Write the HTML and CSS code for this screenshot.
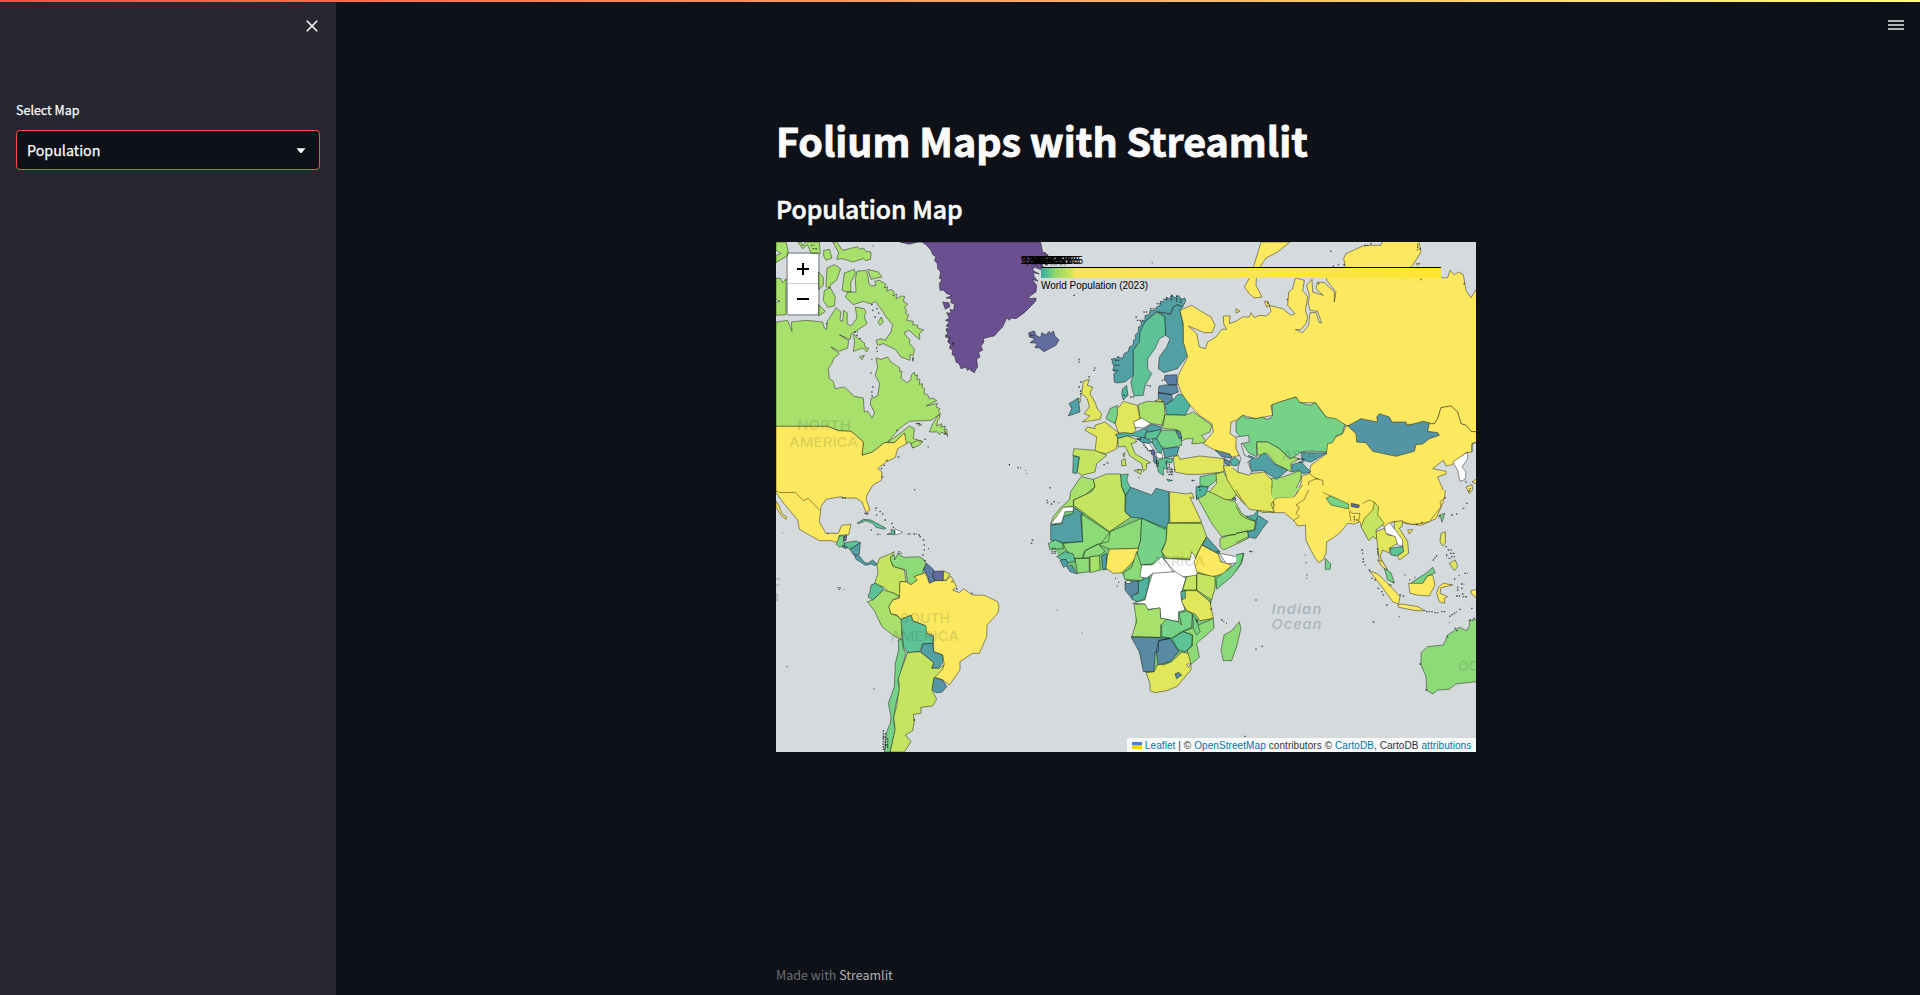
FILE: index.html
```html
<!DOCTYPE html>
<html lang="en">
<head>
<meta charset="utf-8">
<title>Folium Maps with Streamlit</title>
<link rel="stylesheet" href="styles.css">
</head>
<body>
<div class="decoration"></div>
<div class="app">
  <aside class="sidebar">
    <button class="close" aria-label="Close"><svg width="12" height="12" viewBox="0 0 12 12"><path d="M.8 .8 11.2 11.2M11.2 .8 .8 11.2"/></svg></button>
    <div class="field">
      <div class="label">Select Map</div>
      <div class="select"><span>Population</span><svg width="10" height="6" viewBox="0 0 10 6"><path d="M.5 .3h9L5.8 4.7q-.8.8-1.6 0z"/></svg></div>
    </div>
  </aside>
  <main class="main">
    <div class="menu"><svg width="16" height="10" viewBox="0 0 16 10"><path d="M0 1h16M0 5h16M0 9h16"/></svg></div>
    <div class="content">
      <h1>Folium Maps with Streamlit</h1>
      <h2>Population Map</h2>
      <div class="map">
        <svg class="world" width="700" height="510" viewBox="0 0 700 510">
          <!-- North America, Greenland -->
          <g transform="scale(.33333)">
            <path class="g" d="M0 240 35 235 45 262 48 268 46 240 90 235 140 240 145 258 152 262 153 240 180 197 195 210 192 235 200 238 203 205 214 213 213 245 225 252 243 228 238 195 265 200 270 210 265 225 273 245 240 268 226 275 222 293 190 278 218 296 215 318 190 328 165 315 190 335 172 350 170 360 157 380 160 410 172 418 177 440 205 435 235 463 262 468 265 510 275 508 288 528 296 512 283 487 285 470 305 462 311 425 298 400 305 375 300 348 315 352 335 345 345 360 372 378 370 388 378 388 375 408 392 422 403 415 407 398 415 390 418 402 425 398 422 412 432 412 430 427 440 425 438 436 446 440 444 455 455 458 460 470 470 468 482 476 450 492 485 484 480 495 492 500 487 508 495 515 465 535 400 538 370 560 335 600 375 572 400 552 415 560 412 590 430 595 440 598 410 618 403 600 388 605 385 575 355 602 325 602 290 630 258 640 262 600 240 580 225 568 187 566 155 553 0 553Z"/>
            <path class="y" d="M0 553H155L187 566 225 568 240 580 262 600 258 640 290 630 325 602 355 602 385 573 392 605 365 620 358 646 330 660 305 680 318 690 316 715 290 730 275 755 270 770 282 804 270 812 258 780 240 768 205 768 196 764 150 772 135 794 130 840 150 874 187 874 197 850 225 847 218 878 190 880 186 902 165 896 130 896 70 862 65 834 20 780 0 752Z"/>
            <path class="y" d="M0 777 8 790 18 815 32 825 30 832 15 820 0 795Z"/>
            <path class="l" d="M0 747 12 752 58 751 82 776 97 769 112 785 132 806"/>
            <path class="g" d="M0 0H30L37 30 33 42 0 62 0 40 15 35 0 25ZM0 108 14 110 20 122 30 110V218L0 220V180L12 178 0 172ZM66 0H75L80 12 88 0H130L133 34 105 34 95 8 80 20ZM143 25 160 22 168 48 150 55 143 42ZM170 0 182 0 200 25 245 14 250 22 262 18 270 28 285 30 284 52 268 56 262 50 230 60 200 50 182 52 188 32ZM153 78 175 68 194 80 182 115 163 128 162 138 150 134ZM127 90 142 106V130L128 142ZM145 145 163 137 178 165 175 192 155 196 142 175ZM128 188 148 208 128 222Z"/>
            <path class="g" d="M205 93 235 82 238 95 224 122 225 150 204 148 198 145ZM243 88 270 85 276 100 278 122 285 132 300 130 296 118 310 115 330 127 324 138 335 134 332 148 345 142 355 150 350 162 362 156 360 170 375 162 386 163 382 178 395 186 385 198 393 205 388 212 398 218 392 235 412 238 410 248 425 250 425 258 443 264 430 275 432 293 415 280 400 265 386 270 388 280 402 293 400 303 415 322 412 340 402 338 402 355 375 345 358 322 322 305 305 310 300 295 315 290 328 295 345 270 350 248 330 225 320 208 298 178 285 186 262 178 232 188 208 165 215 150 240 150 238 112ZM275 82 307 90 318 105 285 112ZM306 240 316 225 322 240 312 250ZM232 276 250 292 265 303 268 318 278 318 272 330 260 318 232 328 236 300ZM250 345 265 340 258 353Z"/>
            <path class="g" d="M490 516 480 530 470 545 460 570 485 570 490 578 498 570 507 578 506 568 515 583 512 562 504 564 508 552 495 555 498 545 482 552 485 535 492 528ZM425 543 437 548 430 552ZM405 605 425 595 440 600 430 610 410 618Z"/>
            <path class="p2" d="M372 0 400 7 425 0H794L800 30 815 38 800 52 812 68 796 60 805 88 775 75 770 85 790 96 772 92 775 105 786 118 768 112 782 130 780 150 765 160 755 170 780 168 780 175 775 182 745 212 720 230 705 228 700 235 692 228 680 255 665 270 655 282 640 285 622 290 624 300 615 312 620 325 608 330 612 345 602 352 605 375 598 385 596 392 585 386 580 380 575 386 570 376 555 380 550 366 540 360 536 342 528 338 530 325 520 318 524 308 515 300 520 288 508 285 515 275 510 262 520 260 512 250 520 240 508 235 520 228 512 212 525 214 522 202 533 205 535 185 524 182 526 170 510 168 528 160 512 155 503 145 492 145 490 125 498 112 490 110 494 90 485 80 484 65 475 55 480 45 470 38 465 25 450 8 438 0ZM500 180 518 182 522 194 508 202Z"/>
            <path class="d" d="M283 393h4M288 435h5M285 450h8M286 462h6M414 743h4M698 668h4M455 615h3M300 318h4M302 328h4M286 352h3M411 345v16M300 200h5M306 213h4M408 352h5M285 188h6M322 670h8M314 680h6M318 705h4M330 655h6M365 645h6M197 768h16M508 280h8M530 305h8M290 12h3M150 245h5M507 575h6M445 592h6M420 545h12M360 565h8M240 280h6M250 290h5M288 205h8M295 225h6M235 270h10M105 10h10M110 20h14M100 45h8M520 285v12M530 300v12M513 250v12"/>
          </g>

          <!-- Central and South America -->
          <g transform="translate(0 248) scale(.33333)">
            <path class="g3" d="M190 138 203 137V155L207 166 190 172 181 163Z"/><path class="p1" d="M205 138 212 135 210 152 204 153Z"/>
            <path class="g4" d="M207 158 240 153 253 158 222 178 205 168Z"/><path class="b1" d="M200 166 215 172 210 176 200 172Z"/>
            <path class="t2" d="M222 178 253 158 250 194 232 194ZM235 196 250 198 265 217 275 220 290 210 303 222 298 227 285 222 268 226 250 214 240 208Z"/>
            <path class="g4" d="M243 100 262 88 285 90 330 115 325 118 300 112 290 100 270 92 250 100ZM345 118 356 122 355 134 333 133 347 128Z"/><path class="w" d="M356 116 380 127 375 130 358 134Z"/>
            <path class="yg" d="M303 224 310 205 342 192 355 185 344 208 350 228 385 240 390 275 372 275 372 320 350 308 340 308 322 290 295 282 306 250Z"/>
            <path class="g2" d="M344 200 355 195 356 210 365 192 385 202 430 200 442 207 450 222 440 245 445 250 416 260 424 270 408 284 395 282 390 240 353 230 343 210Z"/>
            <path class="b3" d="M452 220 474 240 470 260 480 275 460 280 455 258 442 240Z"/><path class="p1" d="M474 244 502 243 500 273 478 272 470 258Z"/><path class="y2" d="M503 243 522 252 512 270 502 271Z"/>
            <path class="y" d="M372 275 390 275 405 284 424 270 414 260 448 248 460 280 478 272 510 272 525 258 542 290 530 300 550 308 562 296 590 315 625 316 665 335 669 352 665 370 633 405 632 440 610 490 590 490 552 515 552 540 520 585 500 570 473 560 505 525 500 495 473 485 472 435 450 430 445 405 410 393 405 376 375 388 362 374 345 372 338 350 350 330 370 325Z"/>
            <path class="g" d="M274 335 290 330 322 300 350 308 372 320 350 330 338 350 345 372 365 378 380 395 375 448 350 435 318 410 295 362Z"/>
            <path class="g4" d="M285 285 300 280 323 295 310 312 290 330 276 320 282 305ZM375 388 405 376 412 393 450 408 452 430 472 440 470 460 440 462 432 485 395 488 382 470Z"/>
            <path class="t2" d="M440 462 470 460 473 485 500 495 500 518 487 535 467 535 473 518 435 487Z"/><path class="b1" d="M473 562 500 570 512 590 498 607 480 608 467 598Z"/>
            <path class="yg" d="M395 488 432 485 473 518 467 535 490 535 503 525 500 538 473 565 468 600 482 628 470 648 435 652 435 670 412 673 415 692 410 722 388 735 405 755 385 786H342L357 715 353 680 362 650 370 580 365 565 385 515Z"/>
            <path class="g3" d="M367 450 378 448 382 475 390 490 383 515 366 570 370 600 358 650 352 690 357 720 342 786H325L332 725 343 700 345 680 337 640 355 590 358 520 368 480Z"/>
            <path class="d" d="M19 128h2M265 70h12M300 52v10M310 65h5M318 72h4M300 75h4M325 90h5M345 100h8M350 112h4M303 133h10M284 120h4M395 132h10M412 132h10M427 135h5M430 140h6M440 150h6M443 165h4M443 180h4M456 176h3M438 195h6M445 212h5M368 185h4M365 190h14M185 293h10M188 298h5M203 298h2M32 530h3M293 597h3M322 720v60M328 730v50M335 745v30M330 765h8M320 742h8M412 690h8M540 297h8M585 310h5M526 275h5M153 130h4M270 72h7"/>
          </g>

          <!-- Europe -->
          <g transform="translate(224 0) scale(.33333)">
            <path class="p1" d="M86 272 103 267 108 280 122 287 125 272 137 278 148 268 150 275 160 267 165 282 177 294 168 310 132 329 118 318 105 317 112 304 90 302 105 290 88 285Z"/>
            <path class="t2" d="M343 420 341 395 350 392 338 385 342 372 336 362 340 348 350 352 352 343 368 350 372 335 385 328 388 315 400 308 400 295 408 290 405 280 415 270 415 255 425 250 422 238 435 235 435 220 448 218 450 205 465 205 470 195 480 190 482 178 495 178 500 165 508 172 515 158 525 168 535 160 545 172 555 168 557 178 548 195 532 188 520 195 512 215 470 210 465 212 435 240 420 300 400 325 400 400 375 420 350 423Z"/>
            <path class="g4" d="M470 210 495 225 497 280 478 290 465 320 443 350 443 380 455 395 435 430 430 460 402 462 392 420 400 400 400 325 418 300 420 270 435 240Z"/>
            <path class="t2" d="M475 210 512 217 520 195 532 188 548 195 540 205 550 250 550 295 563 340 532 380 492 392 475 380 478 345 500 315 510 290 497 280 495 225Z"/>
            <path class="b3" d="M495 400 530 398 532 428 505 428 493 412Z"/><path class="b2" d="M477 432 502 428 530 430 535 450 515 458 475 452ZM475 452 515 458 518 475 495 488 475 470Z"/>
            <path class="t1" d="M518 475 535 456 560 462 570 492 555 520 500 518 495 490ZM368 440 380 430 384 460 370 474 365 455Z"/>
            <path class="y" d="M465 477 480 470 490 478Z"/>
            <path class="g" d="M415 488 440 478 492 480 495 515 490 550 455 545 420 532ZM495 518 555 520 580 510 635 550 630 570 605 580 620 600 590 605 575 605 580 590 560 590 545 597 540 570 525 562 490 560 485 550Z"/>
            <path class="y2" d="M360 492 370 478 412 490 420 530 402 540 408 565 395 575 355 572 346 545 350 500ZM315 540 355 572 350 620 318 635 285 628 290 585 255 565 262 555 285 560 285 550ZM250 418 268 412 262 430 278 435 270 455 285 480 292 500 305 515 300 532 247 540 270 522 252 515 268 495 262 470 245 455ZM228 472 243 470 240 482Z"/>
            <path class="t2" d="M207 485 235 468 240 510 205 522 215 500Z"/>
            <path class="g3" d="M330 500 352 490 352 520 345 545 318 530Z"/>
            <path class="w" d="M400 540 425 528 453 545 430 558 405 556Z"/>
            <path class="t1" d="M346 578 375 572 398 575 435 558 440 568 432 588 402 582 380 582 355 590Z"/><path class="t2" d="M440 555 455 547 485 555 480 568 440 568Z"/>
            <path class="g4" d="M438 572 485 562 470 588 450 592 435 588Z"/>
            <path class="g3" d="M470 590 485 565 525 565 543 590 545 610 500 620 480 612Z"/><path class="b2" d="M527 563 540 568 546 588 538 590Z"/>
            <path class="t2" d="M488 620 538 615 530 640 495 648ZM410 590 430 585 458 600 445 605 428 602Z"/><path class="t1" d="M458 590 470 590 488 620 482 636 470 625 458 605Z"/>
            <path class="w" d="M430 602 448 605 460 622 445 628ZM467 630 485 635 488 648 472 648Z"/><path class="p1" d="M452 625 463 624 465 640 455 638Z"/><path class="b2" d="M460 640 470 645 470 668 461 660Z"/>
            <path class="g4" d="M470 655 495 648 520 650 515 662 495 662 505 680 490 678 490 700 475 690ZM500 712 518 715 505 718Z"/>
            <path class="yg" d="M353 590 380 582 405 590 410 600 393 605 405 635 430 650 452 662 440 665 440 680 430 688 425 665 390 642 375 612 355 615ZM402 685 425 682 422 697ZM365 655 375 650 378 670 365 672ZM368 635 375 632 372 645ZM222 620 285 625 320 640 290 665 285 690 245 700 232 690 238 645 218 640Z"/>
            <path class="t1" d="M220 642 238 645 230 695 218 692Z"/>
            <path class="y2" d="M520 645 535 640 540 652 600 642 672 650 672 690 600 697 560 697 525 690 522 665Z"/>
            <path class="d" d="M220 160h5M455 62h3M237 350v12M280 385h6M283 378h4M267 402v8M240 420h6M235 435h6M242 445v20M52 677h10M27 668h3M80 695h2M75 685h2M310 668h8M320 663h8M150 738h2M500 655v18M508 665v20M500 690h20M505 698h15M498 683h28M514 678v22M390 465h12M440 430h8M448 432h6M410 235h20M406 225h8M430 210h12M450 200h15M470 185h12M490 172h16M515 160v18M530 160v20M542 170v15M345 355h15M345 370h15M342 385h15M370 460h10M335 350v8M90 280h12M485 415h8M135 30v10M140 40h6M410 592h15M430 608l20 20M470 655v20M475 660v15M140 775h4M575 715h10"/>
          </g>

          <!-- Russia, Central and East Asia -->
          <g transform="translate(460 0) scale(.33333)">
            <path class="y" d="M-168 205-133 190-110 205-75 225-63 250-72 272-95 272-143 252-118 275-110 315-92 320-85 300-60 285-43 262-28 262-37 245-38 222-18 222-20 245 0 238 20 225 40 225 45 212 55 227 70 220 92 222 105 208 100 190 140 200 165 220 177 215 155 190 158 150 170 140 178 108 205 115 200 145 215 165 208 205 215 225 210 245 195 262 178 263 200 272 218 250 222 212 240 212 250 242 257 243 245 208 222 205 217 185 220 160 212 130 228 112 230 150 262 160 240 140 245 120 265 122 295 150V180L300 150 272 115V92L330 85 323 50 330 35 380 12 405 10 435 10 440-5H548L555 30 530 70 490 105 500 108 530 85 570 82 600 90 620 108 635 107 642 85 655 98 668 90 682 98 690 145 705 167 722 140V570L705 568 690 550 675 545 665 510 645 492 615 497 605 530 595 545 550 550 505 550 335 552 270 525 238 482 190 482 180 465 105 490 110 520 60 530 20 520 0 535-15 540-18 575 5 590 0 615 10 640-8 645-62 625-98 605-68 570-72 545-110 520-136 492-163 455-176 420-173 400-145 345-158 300-158 245Z"/>
            <path class="y" d="M75 0H162L125 30 90 48 62 90 60 130 78 165 55 168 40 155 25 135 45 100 60 50ZM85 178 95 178 102 192 92 195ZM185 95 195 92 196 104 183 103ZM0 200 12 208 0 213ZM540 65 552 64 546 70Z"/>
            <path class="y" d="M330 552 595 545 605 530 615 497 645 492 665 510 675 545 690 550 705 568 722 570V600L708 605V630L690 632 648 668 630 672 622 655 605 668 590 680 630 688 630 696 605 705 620 740 622 780 600 830 555 850 510 845 490 835 450 845 400 780 240 780 170 780 195 725 197 702 220 695 225 670 272 635 270 600 320 575Z"/>
            <path class="g3" d="M0 540 20 520 30 528 60 530 80 525 92 532 105 528 110 520 108 488 130 480 180 465 192 482 222 490 238 482 270 525 300 530 327 548 318 575 300 582 290 602 275 605 272 630 225 627 195 630 180 640 165 652 130 620 95 600 62 600V645L38 632 20 605 15 585 0 570Z"/>
            <path class="b1" d="M335 552 375 530 425 540 422 525 430 515 460 525 468 540 510 540 512 552 560 538 580 542 575 568 605 572 610 580 580 590 560 606 540 608 535 628 480 643 410 628 390 602 362 600 360 575Z"/>
            <path class="g" d="M62 600 95 600 130 620 160 650 175 645 190 650 165 665 165 690 145 678 120 668 95 635 65 640ZM105 710 140 705 195 685 195 710 180 740 148 765 108 768Z"/>
            <path class="t2" d="M38 640 62 650 85 632 115 665 155 685 122 712 80 685 45 688ZM195 632 272 633 225 660 200 655ZM167 668 195 660 225 690 200 695 190 685 168 690Z"/>
            <path class="y2" d="M-20 670 5 690 45 695 85 690 108 715 108 768 120 810 80 812 20 780-15 740Z"/>
            <path class="sea" d="M0 585 38 580 40 600 15 605 25 640 50 650 35 660 48 690 40 700 5 690 8 670 15 650 0 620Z"/>
            <path class="l" d="M240 710 218 720 218 745 205 770M220 695 240 710 260 715 262 755 275 775M720 602 708 605V630"/>
            <path class="w" d="M650 660 695 630 695 650 678 675 690 690 688 712 672 718 665 685Z"/><path class="y" d="M690 735 708 728 710 742 700 755ZM708 720 722 710V725Z"/>
            <path class="d" d="M282 28h6M290 72h4M305 68h4M322 68h6M185 652h20M190 660h15M198 648v15M545 5v20M550 20h5M555 110v5M225 90h2M262 102h6M688 720h4M612 745h8M618 755h5M625 768h5M240 710h6M95 180v10M245 125h8M700 740h8M154 170v5M682 125h6M385 10h12M402 5h8"/>
          </g>

          <!-- Africa and the Middle East -->
          <g transform="translate(254 138) scale(.33333)">
            <path class="base" d="M155 310 190 300 270 290 290 345 365 350 410 340 480 360 512 430 525 480 560 530 600 565 555 625 540 680 548 720 500 780 475 860 440 900 365 925 345 870 310 770 320 690 310 640 288 600 270 575 235 570 145 578 85 525 64 490 66 440 100 395 125 345Z"/>
            <path class="g" d="M153 290 190 298 195 320 165 345 130 360 130 380 100 382 78 432 62 432 70 410 90 385 118 360 122 335Z"/>
            <path class="yg" d="M190 298 230 282 272 282 275 320 285 345 285 395 302 412 238 455 130 375 132 360 185 335 195 320Z"/>
            <path class="g4" d="M272 285 295 282 290 300 302 325 288 348 275 320Z"/>
            <path class="t2" d="M288 345 302 322 365 345 378 325 417 335 417 448 335 415 305 412 285 395ZM62 435 95 432 100 410 130 400V382L160 402 152 405 158 485 100 488 62 480Z"/><path class="w" d="M62 433 100 382 130 380V393L105 395 95 428Z"/>
            <path class="y2" d="M418 335 470 342 485 338 492 355 480 352 515 427 420 428Z"/>
            <path class="g2" d="M155 402 240 458 235 485 205 492 165 512 155 535 130 535 105 505 100 490 158 485ZM240 455 335 415 332 480 325 505 240 508 210 495ZM165 512 205 492 225 515 205 528 160 535ZM135 535 178 535 178 575 142 580Z"/>
            <path class="g3" d="M335 415 410 450 408 485 395 510 400 535 365 552 330 555 320 520 332 480ZM55 490 75 480 98 490 100 505 60 510Z"/>
            <path class="yg" d="M412 430H515L530 470 515 495 500 525 495 540 460 535 410 535 395 515 408 485Z"/>
            <path class="t2" d="M517 495 530 470 570 515 565 522Z"/><path class="g4" d="M80 530 105 515 130 522 135 545 110 548Z"/><path class="t2" d="M90 540 108 538 115 555 100 562ZM110 560 125 555 142 582 120 575ZM215 528 230 520 228 568 218 568Z"/><path class="g" d="M180 530 208 527 210 570 180 578Z"/>
            <path class="y" d="M238 508 325 505 320 530 300 555 275 578 250 580 228 565 232 530Z"/>
            <path class="g2" d="M320 515 335 560 340 602 285 598 280 580 305 562Z"/>
            <path class="w" d="M335 555 365 555 395 530 435 575 400 580 368 580 350 595 330 590ZM400 535 480 540 485 515 495 530 505 570 500 590 440 590ZM568 520 620 530 620 548 590 552Z"/>
            <path class="y" d="M515 495 565 522 572 545 605 555 580 582 545 590 500 575 492 545Z"/>
            <path class="g3" d="M620 525 642 520 635 550 605 590 560 628 558 595 605 560 622 545ZM510 290 560 280 560 300 535 320 510 318Z"/>
            <path class="g" d="M498 345 515 330 540 335 590 358 615 365 635 400 676 425 673 450 640 462 600 465 575 470 545 430ZM570 475 600 465 648 460 655 475 620 492 580 510 570 500Z"/>
            <path class="yg" d="M558 282 580 275 595 300 620 340 610 360 585 358 538 335 560 310Z"/>
            <path class="y2" d="M605 255 580 258 592 300 620 345 645 375"/>
            <path class="t1" d="M498 320 510 318 535 322 525 345 500 358 498 340ZM600 240 615 232 630 245 620 258 605 255Z"/><path class="b2" d="M555 210 600 222 605 235 575 230ZM582 235 600 245 598 258 585 250ZM605 355 615 352 618 362Z"/>
            <path class="d" d="M58 323h3M50 368h8M62 372h5M70 365h5M85 368h3M5 480h5M2 490h5M65 505h12M65 515h15M65 520h12M485 302h8M322 270h5M325 293h3M255 595h3M500 350v10M505 322h10M510 328v8M560 515h10"/>
          </g>

          <!-- Southern Africa -->
          <g transform="translate(254 298) scale(.33333)">
            <path class="g2" d="M485 265 550 235 552 265 500 310 508 352 480 375 472 330 487 318 487 285 460 275ZM628 245 633 265 620 320 605 362 580 362 573 330 582 285 605 272Z"/>
            <path class="b2" d="M285 125 325 122 325 155 305 175 285 150Z"/><path class="t1" d="M325 125 358 110 355 140 345 175 325 185 305 178 308 165 325 160Z"/><path class="w" d="M288 123 302 122 302 130 288 130Z"/>
            <path class="w" d="M368 100 435 95 468 115 455 155 455 180 465 210 445 215 445 245 392 235 390 205 350 208 345 192 308 190 345 180 358 130Z"/>
            <path class="g" d="M312 193 345 192 355 210 390 203 392 235 410 237 408 252 392 255 392 292 305 290 320 245Z"/>
            <path class="yg" d="M470 110 500 105 500 150 458 150ZM500 100 555 110 555 145 545 180 500 150Z"/>
            <path class="y2" d="M465 152 500 152 540 185 550 235 510 242 495 222 470 212 455 185ZM348 398 372 395 385 370 400 375 425 365 455 337 475 340 483 375 483 390 440 440 410 452 375 458 360 452 360 430Z"/>
            <path class="t1" d="M452 155 466 152 466 175 454 178Z"/>
            <path class="g3" d="M395 253 410 238 445 245 455 255 447 220 470 212 487 222 485 262 455 275 425 295 395 290ZM488 225 500 240 510 275 500 285 490 265Z"/>
            <path class="g4" d="M425 295 460 275 487 285 485 318 465 335 445 330Z"/>
            <path class="b2" d="M303 291 395 293 420 295 385 302 385 335 375 338 372 395 340 395 328 335ZM387 302 420 295 447 335 420 365 385 375 378 335ZM435 402 445 397 455 405 440 416Z"/><path class="w" d="M470 372 482 372 475 382Z"/>
            <path class="d" d="M80 210h2M155 279h2M677 180h2M677 327h2M695 319h3M573 240h5M580 245h3M588 250h3M265 127h3M260 138h3M645 589h2M660 35h8M542 182v10M543 205v6M498 240h4v5h-4z"/>
          </g>

          <!-- South Asia, Southeast Asia, Australia -->
          <g transform="translate(460 248) scale(.33333)">
            <path class="y" d="M628 0 625 25 612 35 615 50 600 70 580 95 560 100 530 103 500 96 470 95 445 110 430 100 420 85 415 60 405 115 378 115 372 95 355 102 335 100 315 125 290 145 272 155 270 190 262 208 248 218 238 205 222 175 210 150 208 105 185 108 172 90 145 68 108 68 115 45 108 24 120 24 175 20 200-15"/>
            <path class="y2" d="M107-10 108 15 120 25 105 42 115 66 70 62 40 58 15 25 0 0"/><path class="gn" d="M107-5 196-5 180 5 175 12 172 20 120 24 108 24Z"/>
            <path class="g" d="M0 50 15 75 30 85 58 95 55 120 0 130M0 158 38 140 35 122 0 130"/><path class="t2" d="M62 78 70 78 96 95 80 115 60 145 38 142 35 125 58 118Z"/><path class="t1" d="M30 80 52 76 66 60 65 80 58 93Z"/>
            <path class="g3" d="M270 25 285 18 338 42 338 57 285 45ZM268 205 285 222 282 238 268 238Z"/><path class="p1" d="M346 40 370 45 368 53 346 50Z"/><path class="g3" d="M0 195 22 190 15 220 0 243"/>
            <path class="yg" d="M385 85 410 60 415 38 428 50 425 75 445 100 420 120 425 150 410 140 398 152 375 110Z"/>
            <path class="y2" d="M420 125 445 115 455 135 482 138 485 160 460 175 462 190 440 180 432 200 450 235 430 215 425 170ZM475 95 500 92 498 110 490 115 515 155 518 190 490 210 485 200 500 185 500 165 475 120ZM615 130 628 125 628 160 620 168 612 155ZM640 220 658 210 665 230 655 242Z"/>
            <path class="w" d="M445 110 460 98 478 120 500 150 500 168 485 165 478 140 450 130Z"/><path class="g4" d="M462 175 500 170 503 185 480 198 465 195Z"/>
            <path class="g3" d="M445 235 465 248 475 278 455 270ZM612 75 626 70 618 97ZM525 280 545 265 570 250 590 232 598 248 575 258 560 280 530 285Z"/>
            <path class="y" d="M400 242 425 252 460 285 492 320 488 342 470 335 430 280ZM485 345 500 342 545 350 568 362 540 362 488 352ZM518 280 560 280 575 258 590 255 597 285 580 318 545 315 522 310ZM608 290 622 280 650 285 615 293 612 310 635 320 625 325 625 340 610 335 602 310ZM705 302 722 298V325L705 310ZM515 120 530 118 520 132ZM425 210 440 215 455 240 440 232Z"/>
            <path class="g2" d="M722 388 700 392 700 408 692 422 670 412 650 425 635 435 622 465 575 470 555 488 555 525 570 560 572 600 590 612 605 600 640 598 660 582 722 575Z"/>
            <path class="l" d="M218 0 205 28 180 45 190 52 180 70 190 80 172 92M262 5 265 10 285 18M340 62 350 70 372 70 368 95M340 65 345 95M380 40 400 30 418 38"/>
            <path class="d" d="M376 180h5M378 190h4M382 205v15M386 225h3M398 240h4M206 195h2M209 218h3M211 255h3M211 265h3M205 353h4M410 396h5M488 380h3M59 330h2M59 477h2M77 469h3M40 184h10M405 265h5M415 270h5M425 295h8M435 305h5M440 315h4M458 285h10M470 278h8M490 315h8M500 318h5M645 75h6M660 72h4M680 55h5M690 40h5M628 170h8M635 180h12M642 190h14M645 200h12M638 205h8M632 192v10M590 212l15-18M665 290v15M675 282h10M675 295h8M680 320h15M660 318h12M656 265v6M668 256h3M685 250h10M570 365h20M595 368h12M615 365h15M640 380l22-15M670 358h6M705 355h6M700 390h10M712 385h8M655 415h5M660 422h6M632 440h5M550 522h8M568 600h5M505 255h3M535 262h3M520 270h3M555 97h6M540 103h6M355 78v18M360 90h8M610 75v10M640 398h2M25 739h3M450 345h8M680 310v8M425 175v20M700 0v8"/>
          </g>

          <!-- Place names -->
          <g class="land">
            <text x="21" y="187.800" textLength="54" lengthAdjust="spacingAndGlyphs">NORTH</text><text x="13" y="204.800" textLength="69" lengthAdjust="spacingAndGlyphs">AMERICA</text>
            <text x="124" y="381.200" textLength="50" lengthAdjust="spacingAndGlyphs">SOUTH</text><text x="114" y="398.500" textLength="69" lengthAdjust="spacingAndGlyphs">AMERICA</text>
            <text x="376" y="324" textLength="53" lengthAdjust="spacingAndGlyphs">AFRICA</text><text x="506" y="218" textLength="35" lengthAdjust="spacingAndGlyphs">ASIA</text><text x="682" y="428.500" textLength="21" lengthAdjust="spacingAndGlyphs">OC</text>
          </g>
          <g class="ocean"><text x="495.500" y="371.800" textLength="51" lengthAdjust="spacingAndGlyphs">Indian</text><text x="495.500" y="387" textLength="51" lengthAdjust="spacingAndGlyphs">Ocean</text><text x="-3" y="344">c</text><text x="-5" y="359">n</text></g>

          <!-- Colour scale -->
          <g class="legend">
            <rect x="265" y="26" width="400" height="10" fill="url(#scale)"/>
            <path d="M265 25.500h400"/>
            <text x="244" y="22">1,346,875</text><text x="246" y="22">12,936,975</text><text x="249" y="22">5,946,353</text><text x="248" y="22">18,690,375</text><text x="252" y="22">26,439,275</text><text x="245" y="22">9,826,438</text><text x="254" y="22">34,367,375</text><text x="257" y="22">46,876,775</text>
            <text class="caption" x="265" y="47.400" textLength="107">World Population (2023)</text>
          </g>
          <defs><linearGradient id="scale"><stop offset="0" stop-color="#45a7a1"/><stop offset=".015" stop-color="#51bc91"/><stop offset=".035" stop-color="#91d86d"/><stop offset=".08" stop-color="#d7e655"/><stop offset=".083" stop-color="#f7e358"/><stop offset=".5" stop-color="#f9e452"/><stop offset=".8" stop-color="#fde640"/><stop offset="1" stop-color="#ffe62e"/></linearGradient></defs>
        </svg>
        <div class="zoom">
          <button aria-label="Zoom in"><svg width="12" height="12" viewBox="0 0 12 12"><path d="M0 6h12M6 0v12"/></svg></button>
          <button aria-label="Zoom out"><svg width="12" height="12" viewBox="0 0 12 12"><path d="M0 6h12"/></svg></button>
        </div>
        <div class="attribution"><svg width="10" height="7" viewBox="0 0 10 7"><path fill="#4c7be1" d="M0 0h10v3.500H0z"/><path fill="#ffd500" d="M0 3.500h10V7H0z"/></svg> <a>Leaflet</a> | © <a>OpenStreetMap</a> contributors © <a>CartoDB</a>, CartoDB <a>attributions</a></div>
      </div>
      <footer>Made with <a>Streamlit</a></footer>
    </div>
  </main>
</div>
</body>
</html>
```

FILE: styles.css
```css
* { box-sizing: border-box; }
body { margin: 0; background: #0e1117; color: #fafafa; font-family: "Noto Sans CJK SC", sans-serif; overflow: hidden; }
button { border: 0; padding: 0; background: none; }
svg { display: block; }
.decoration { position: absolute; top: 0; left: 0; right: 0; height: 2px; background: linear-gradient(90deg, #ff4b4b, #fffd80); z-index: 2; }
.app { display: flex; height: 995px; }
.sidebar { width: 336px; background: #262730; padding: 20px 16px; display: flex; flex-direction: column; }
.close { align-self: flex-end; margin-right: 2px; }
.close path { stroke: #fafafa; stroke-width: 1.6; fill: none; }
.field { margin-top: 68px; }
.label { font-size: 12.5px; font-weight: 400; line-height: 20px; height: 30px; -webkit-text-stroke: .25px; }
.select { height: 40px; border: 1px solid #ff4b4b; border-radius: 4px; background: #0e1117; padding: 0 13px 0 10px; display: flex; align-items: center; justify-content: space-between; font-size: 14.3px; font-weight: 400; line-height: 24px; -webkit-text-stroke: .25px; }
.select svg { margin-top: 2px; }
.select path { fill: #fafafa; }
.main { flex: 1; display: flex; flex-direction: column; align-items: center; }
.menu { align-self: flex-end; padding: 20px 16px 0 0; height: 40px; }
.menu path { stroke: #e8e8ea; stroke-width: 1.7; }
.content { width: 704px; padding: 0 2px; margin-left: -4px; display: flex; flex-direction: column; height: 955px; }
h1 { margin: 73px 0 0; font-size: 39.4px; font-weight: 700; line-height: 53px; height: 55px; white-space: nowrap; -webkit-text-stroke: .9px; }
h2 { margin: 23px 0 0; font-size: 24.8px; font-weight: 500; line-height: 34px; height: 51px; white-space: nowrap; -webkit-text-stroke: .6px; }
.map { position: relative; width: 700px; height: 510px; background: #d5dadd; overflow: hidden; }
.world path { stroke: rgba(0, 0, 0, .42); stroke-width: 3; stroke-linejoin: round; }
.world .l { fill: none; }
.world .d { fill: none; stroke: rgba(20, 25, 30, .7); stroke-width: 4; stroke-dasharray: 5 3; }
.world .sea { fill: #d5dadd; }
.world .base { fill: #7cc47a; stroke: none; }
.world .w { fill: #fff; }
.world .y { fill: #fde95f; }
.world .y2 { fill: #e2e65a; }
.world .yg { fill: #c5e460; }
.world .g { fill: #a8e06c; }
.world .gn { fill: #a8e06c; stroke: none; }
.world .g2 { fill: #8dda78; }
.world .g3 { fill: #75d287; }
.world .g4 { fill: #5dc295; }
.world .t1 { fill: #4fb3a0; }
.world .t2 { fill: #50a0a4; }
.world .b1 { fill: #5495a5; }
.world .b2 { fill: #588aa3; }
.world .b3 { fill: #5a7ca3; }
.world .p1 { fill: #626d9f; }
.world .p2 { fill: #6b5091; }
.land { font: 600 12.5px Inter, sans-serif; fill: rgba(60, 80, 50, .17); }
.ocean { font: italic 500 13px Inter, sans-serif; fill: #a8b3bc; letter-spacing: 1px; }
.legend { font: 10px "Liberation Sans", Arial, sans-serif; fill: #000; }
.world .legend path { stroke: #000; stroke-width: 1; }
.zoom { position: absolute; left: 10px; top: 10px; width: 34px; border: 2px solid rgba(0, 0, 0, .2); border-radius: 4px; background-clip: padding-box; }
.zoom button { display: flex; align-items: center; justify-content: center; width: 30px; height: 30px; background: #fff; border-radius: 0 0 2px 2px; }
.zoom button:first-child { border-bottom: 1px solid #ccc; border-radius: 2px 2px 0 0; }
.zoom path { stroke: #000; stroke-width: 2; }
.attribution { position: absolute; right: 0; bottom: 0; width: 349px; height: 14px; padding: 0 5px; background: rgba(255, 255, 255, .8); color: #333; font: 10px/15px "Liberation Sans", Arial, sans-serif; letter-spacing: .08px; white-space: nowrap; }
.attribution svg { display: inline-block; }
.attribution a { color: #0078a8; }
footer { margin-top: auto; padding-bottom: 10px; font-size: 12.5px; line-height: 20px; color: #6d6f74; }
footer a { color: #b0b1b4; }
```
